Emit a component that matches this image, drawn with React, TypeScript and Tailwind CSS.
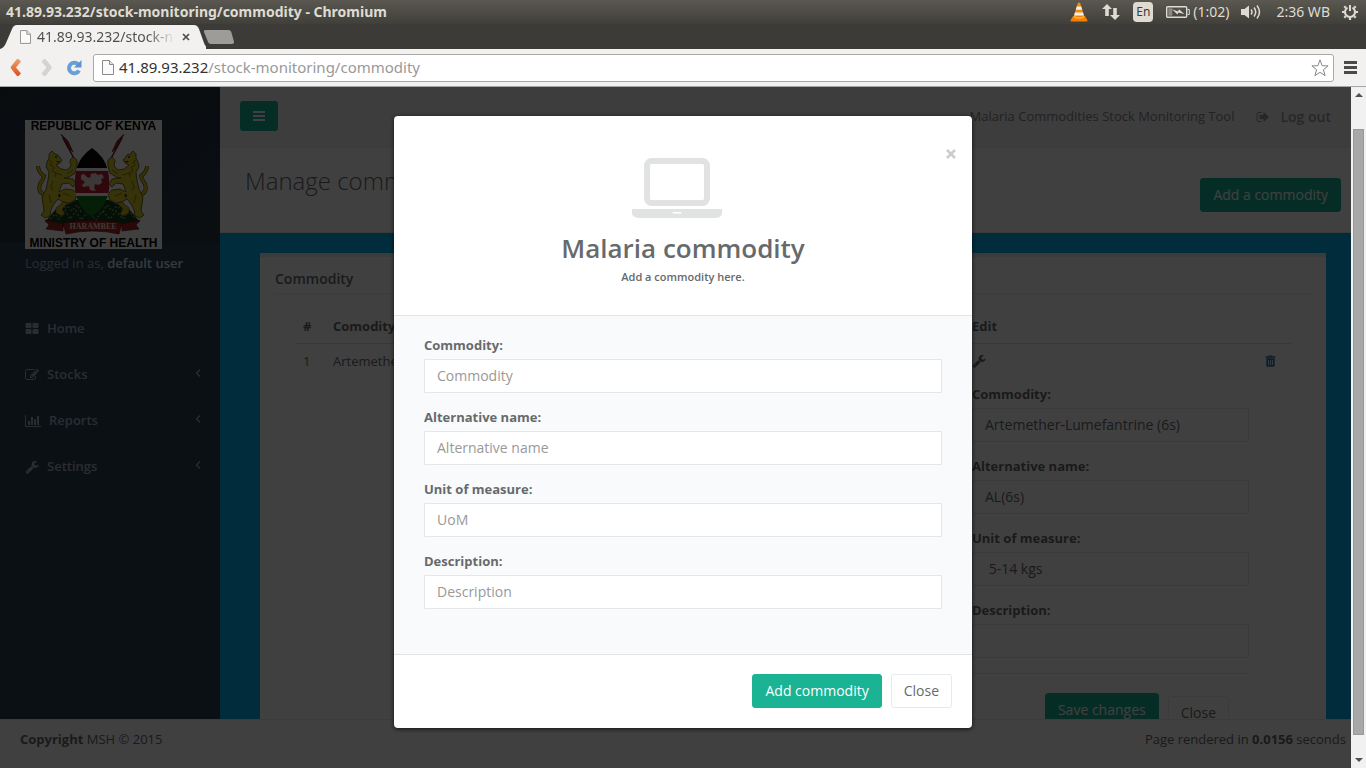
import React from 'react';

const ICONS = {
  edit: 'M888 1184l116-116-152-152-116 116v56h96v96h56zm440-720q-16-16-33 1l-350 350q-17 17-1 33t33-1l350-350q17-17 1-33zm80 594v190q0 119-84.5 203.5t-203.5 84.5h-832q-119 0-203.5-84.5t-84.5-203.5v-832q0-119 84.5-203.5t203.5-84.5h832q63 0 117 25 15 7 18 23 3 17-9 29l-49 49q-14 14-32 8-23-6-45-6h-832q-66 0-113 47t-47 113v832q0 66 47 113t113 47h832q66 0 113-47t47-113v-126q0-13 9-22l64-64q15-15 35-7t20 29zm-96-738l288 288-672 672h-288v-288zm444 132l-92 92-288-288 92-92q28-28 68-28t68 28l152 152q28 28 28 68t-28 68z',
  chart: 'M640 896v512h-256v-512h256zm384-512v1024h-256v-1024h256zm1024 1152v128h-2048v-1536h128v1408h1920zm-640-896v768h-256v-768h256zm384-384v1152h-256v-1152h256z',
  wrench: 'M448 1472q0-26-19-45t-45-19-45 19-19 45 19 45 45 19 45-19 19-45zm644-420l-682 682q-37 37-90 37-52 0-91-37l-106-108q-38-36-38-90 0-53 38-91l681-681q39 98 114.5 173.5t173.5 114.5zm634-435q0 39-23 106-47 134-164.5 217.5t-258.5 83.5q-185 0-316.5-131.5t-131.5-316.5 131.5-316.5 316.5-131.5q58 0 121.5 16.5t107.5 46.5q16 11 16 28t-16 28l-293 169v224l193 107q5-3 79-48.5t135.5-81 70.5-35.5q15 0 23.5 10t8.5 25z',
  signOut: 'M704 1440q0 4 1 20t.5 26.5-3 23.5-10 19.5-20.5 6.5h-320q-119 0-203.5-84.5t-84.5-203.5v-704q0-119 84.5-203.5t203.5-84.5h320q13 0 22.5 9.5t9.5 22.5q0 4 1 20t.5 26.5-3 23.5-10 19.5-20.5 6.5h-320q-66 0-113 47t-47 113v704q0 66 47 113t113 47h312l11.5 1 11.5 3 8 5.5 7 9 2 13.5zm928-544q0 26-19 45l-544 544q-19 19-45 19t-45-19-19-45v-288h-448q-26 0-45-19t-19-45v-384q0-26 19-45t45-19h448v-288q0-26 19-45t45-19 45 19l544 544q19 19 19 45z',
  laptop: 'M416 1152q-66 0-113-47t-47-113v-704q0-66 47-113t113-47h1088q66 0 113 47t47 113v704q0 66-47 113t-113 47h-1088zm-32-864v704q0 13 9.500 22.500t22.500 9.500h1088q13 0 22.500-9.500t9.500-22.500v-704q0-13-9.500-22.500t-22.500-9.500h-1088q-13 0-22.500 9.500t-9.500 22.500zM1760 1216h160v96q0 40-47 68t-113 28h-1600q-66 0-113-28t-47-68v-96h1760zm-720 96q16 0 16-16t-16-16h-160q-16 0-16 16t16 16h160z',
  grid: 'M832 1024v384q0 52-38 90t-90 38h-512q-52 0-90-38t-38-90v-384q0-52 38-90t90-38h512q52 0 90 38t38 90zm0-768v384q0 52-38 90t-90 38h-512q-52 0-90-38t-38-90v-384q0-52 38-90t90-38h512q52 0 90 38t38 90zm896 768v384q0 52-38 90t-90 38h-512q-52 0-90-38t-38-90v-384q0-52 38-90t90-38h512q52 0 90 38t38 90zm0-768v384q0 52-38 90t-90 38h-512q-52 0-90-38t-38-90v-384q0-52 38-90t90-38h512q52 0 90 38t38 90z',
};

function Icon({ d, box = '0 0 1792 1792', className }: { d: string; box?: string; className: string }) {
  return (
    <svg viewBox={box} className={className} fill="currentColor" aria-hidden="true">
      <path d={d} fillRule="evenodd" />
    </svg>
  );
}

function PageIcon({ className }: { className: string }) {
  return (
    <svg viewBox="0 0 12 15" className={className} aria-hidden="true">
      <path d="M.5.500h7l4 4v10H.5z" fill="#fafafa" stroke="#8a8a8a" />
      <path d="M7.500.500v4h4" fill="#e4e4e4" stroke="#8a8a8a" />
    </svg>
  );
}

function SystemBar() {
  return (
    <header className="flex h-6 shrink-0 items-center justify-between bg-linear-to-b from-[#5a5850] to-[#403f3a] pr-2 pl-[6px] text-[#dfdbd2]">
      <span className="text-sm font-bold">41.89.93.232/stock-monitoring/commodity - Chromium</span>
      <div className="flex items-center text-sm leading-6">
        <svg viewBox="0 0 18 20" className="mr-[14px] h-5 w-[18px]" aria-hidden="true">
          <path d="M7.800 1q1.200-1 2.400 0l4.300 14H3.500z" fill="#f58a0b" />
          <path d="M6.800 4.500h4.400l1 3.200H5.800zM5 10.500h8l.9 3H4.100z" fill="#eee" />
          <path d="M3 14h12l2.500 4.500q0 1-1 1h-15q-1 0-1-1z" fill="#f57f00" />
          <path d="M4 14q5 2.500 10 0v1.500q-5 2.500-10 0z" fill="#ffb74a" />
        </svg>
        <svg viewBox="0 0 18 16" className="mr-[13px] h-4 w-[18px]" fill="currentColor" aria-hidden="true">
          <path d="M5 0l5 5H6.800v7H3.200V5H0zM13 16l5-5h-3.200V4h-3.600v7H8z" />
        </svg>
        <span className="mr-[13px] flex h-5 w-5 items-center justify-center rounded-sm bg-[#dfdbd2] text-xs text-[#3c3b37]">En</span>
        <svg viewBox="0 0 24 12" className="mr-[3px] h-3 w-6" aria-hidden="true">
          <rect x=".7" y=".7" width="20" height="10.600" rx="1" fill="none" stroke="#dfdbd2" strokeWidth="1.400" />
          <path d="M21.500 3.500h1.800v5h-1.800" fill="none" stroke="#dfdbd2" />
          <path d="M2.300 2.300h4v7.400h-4z" fill="#8d8a82" />
          <path d="M6 3.200l6 2.300 1-2.300 5.500 5-6-1.800-1 2.200z" fill="#dfdbd2" />
        </svg>
        <span className="mr-3">(1:02)</span>
        <svg viewBox="0 0 20 16" className="mr-[15px] h-4 w-5" aria-hidden="true">
          <path d="M0 5h3.500L8 1.500v13L3.500 11H0z" fill="#dfdbd2" />
          <path d="M10 5.500q2 2.500 0 5M13 3.500q3.500 4.500 0 9M16 1.500q5 6.500 0 13" fill="none" stroke="#dfdbd2" strokeWidth="1.500" />
        </svg>
        <span className="mr-3">2:36 WB</span>
        <svg viewBox="0 0 16 16" className="h-4 w-4" fill="none" stroke="#dfdbd2" aria-hidden="true">
          <path d="M5.500 3.700a5 5 0 1 0 5 0" strokeWidth="2" />
          <path d="M8 1v6" strokeWidth="2" />
          <path d="M3.700 3.700L2.300 2.300M12.300 3.700l1.400-1.400M2.500 8H0M13.500 8H16M3.700 12.300l-1.400 1.400M12.300 12.300l1.400 1.400M8 13.500V16" strokeWidth="2.200" />
        </svg>
      </div>
    </header>
  );
}

function BrowserChrome() {
  return (
    <>
      <div className="flex h-[25px] shrink-0 items-end bg-[#3c3b37]">
        <div className="relative h-6 w-[206px]">
          <svg viewBox="0 0 206 24" className="absolute inset-0 h-6 w-[206px]" aria-hidden="true">
            <path d="M0 24q4-1 6-6l6-14q1.500-4 5-4h177q3.500 0 5 4l5 14q2 5 6 6z" fill="#f2f1f0" />
          </svg>
          <div className="relative flex h-6 items-center pl-5">
            <PageIcon className="h-[14px] w-[11px]" />
            <span className="ml-[6px] w-[138px] overflow-hidden bg-linear-to-r from-[#4c4c4c] from-80% to-transparent bg-clip-text text-sm whitespace-nowrap text-transparent">
              41.89.93.232/stock-n
            </span>
            <button aria-label="Close tab" className="ml-[7px] h-2 w-2 text-[#4c4c4c]">
              <svg viewBox="0 0 8 8" className="h-2 w-2" stroke="currentColor" strokeWidth="1.700">
                <path d="M1 1l6 6M7 1L1 7" />
              </svg>
            </button>
          </div>
        </div>
        <button aria-label="New tab" className="-ml-[2px] h-[19px] w-[30px]">
          <svg viewBox="0 0 30 19" className="h-[19px] w-[30px]">
            <path d="M1.500 0h23q2 0 2.800 2l2.500 9q.7 3-1.800 3H7q-2.200 0-3-2L0 2q-.5-2 1.500-2z" fill="#9d9c99" />
          </svg>
        </button>
      </div>
      <div className="flex h-[38px] shrink-0 items-center border-b border-[#a6a6a6] bg-[#f2f1f0] pr-[9px] pl-[10px]">
        <button aria-label="Back" className="mr-[20px]">
          <svg viewBox="0 0 11 17" className="h-[17px] w-[11px]">
            <defs>
              <linearGradient id="back" x1="0" y1="0" x2="0" y2="1">
                <stop offset="0" stopColor="#eda069" />
                <stop offset="1" stopColor="#df4f1d" />
              </linearGradient>
            </defs>
            <path d="M8.500 0L11 2.500 6 8.500 11 14.500 8.500 17H7L.8 9.200V7.800L7 0z" fill="url(#back)" />
          </svg>
        </button>
        <button aria-label="Forward" className="mr-[14px]">
          <svg viewBox="0 0 11 17" className="h-[17px] w-[11px]">
            <path d="M3 0L.5 2.500l5 6-5 6L3 17h1.500l6.200-7.800V7.800L4.500 0z" fill="#d4d3d2" />
          </svg>
        </button>
        <button aria-label="Reload" className="mr-[11px]">
          <svg viewBox="0 0 16 16" className="h-4 w-4">
            <path d="M12 4.200A5.300 5.300 0 1 0 13 10.500" fill="none" stroke="#6a9fd6" strokeWidth="4" />
            <path d="M15.500 0v7.500H8z" fill="#5c94d0" />
          </svg>
        </button>
        <div className="flex h-7 flex-1 items-center rounded-[3px] border border-[#a9a8a6] bg-white pr-1 pl-2 text-[15px]">
          <PageIcon className="h-[15px] w-3" />
          <span className="ml-[5px] flex-1 whitespace-nowrap text-[#999]">
            <span className="text-[#333]">41.89.93.232</span>/stock-monitoring/commodity
          </span>
          <svg viewBox="0 0 18 18" className="h-[18px] w-[18px]" aria-hidden="true">
            <path d="M9 .9l2.100 5.800 6 .2-4.700 3.800 1.700 6L9 13.300l-5.100 3.400 1.700-6L.9 6.900l6-.2z" fill="#fff" stroke="#888" strokeLinejoin="round" />
          </svg>
        </div>
        <button aria-label="Browser menu" className="ml-[10px]">
          <svg viewBox="0 0 13 13" className="h-[13px] w-[13px]">
            <path d="M0 1.500h13M0 6.500h13M0 11.500h13" stroke="#4a4a4a" strokeWidth="3" />
          </svg>
        </button>
      </div>
    </>
  );
}

function Lion() {
  return (
    <g>
      <path d="M21 75Q12 73 15 64Q18 60 19 56Q13 52 13 46" fill="none" stroke="#574b12" strokeWidth="4" />
      <path d="M21 75Q12 73 15 64Q18 60 19 56Q13 52 13 46" fill="none" stroke="#d2c022" strokeWidth="2.800" />
      <path
        d="M27 31l3 3 3 1 2 3 2 2-2 3-4 2 5 4 6 1 4-4-1-6 3-3 4 3 0 6-2 7-6 4-5 1 9 1 3 5-3 3-4-4-7 1-3 8 6-3 8 1 4 4-2 6-6 3-6-1-5-3-4 5-3 6-1 6-5 2-4-3 3-4-1-7-1-7 4-8 2-9 1-8-3-5 1-5 2-4 0-4z"
        fill="#d8c626"
        stroke="#574b12"
        strokeWidth=".8"
      />
      <path d="M38 82l-7 6 0 5 6 3 3-2-3-5 6-6z" fill="#c8b61f" stroke="#574b12" strokeWidth=".6" />
      <path d="M24 40l3 2-2 3 4 2-2 4 4 2-1 4M28 61l-2 6 2 4M24 75l2 8M38 73l7 3M42 54l6-4M30 53l7 2" fill="none" stroke="#8b7b16" strokeWidth="1" />
      <path d="M31 41l4 0-2 2z" fill="#8c1c1c" />
      <circle cx="31" cy="37" r=".9" fill="#222" />
      <path d="M33 74l3 1-2 3z" fill="#222" />
    </g>
  );
}

function Emblem() {
  return (
    <figure className="flex h-[129px] w-[137px] flex-col items-center justify-between bg-white font-['Liberation_Sans',sans-serif] text-xs leading-3 font-bold whitespace-nowrap text-black">
      <span>REPUBLIC OF KENYA</span>
      <svg viewBox="0 12 137 105" className="h-[105px] w-[137px]" aria-label="Coat of arms">
        <path d="M38 18l14 26M97 18L83 44" stroke="#7b1a20" strokeWidth="1.500" />
        <path d="M36 14l7 7 5 11-5-4zM99 14l-7 7-5 11 5-4z" fill="#9b1c26" stroke="#4b1014" strokeWidth=".6" />
        <path d="M20 102l10-12 7-4 6-2 8-4 33 0 8 4 6 2 7 4 10 12-24 6H43z" fill="#173f1b" />
        <path d="M25 99l5-5 4 5 6-9 5 9 6-8 5 9 7-8 8 8 6-9 8 8 6-8 7 8 6-8 6 7M36 90l6-4 5 5 5-6 4 7M98 90l-6-4-5 5-5-6-4 7" stroke="#6aa766" strokeWidth="1.300" fill="none" strokeDasharray="2 2" />
        <Lion />
        <g transform="translate(135 0) scale(-1 1)">
          <Lion />
        </g>
        <clipPath id="shield">
          <path d="M67 28q12 8 16 22 3 18-1 28-4 12-15 18-11-6-15-18-4-10-1-28 4-14 16-22z" />
        </clipPath>
        <g clipPath="url(#shield)">
          <path d="M45 27h44v21H45z" fill="#080808" />
          <path d="M45 48h44v28H45z" fill="#fff" />
          <path d="M45 51h44v22H45z" fill="#c41f38" />
          <path d="M45 76h44v24H45z" fill="#177a20" />
        </g>
        <path d="M56 55l3-1 3 3 3 1 1-4 4-1 3 2 4-1 2 4-3 1 1 4-4 2-3-1-1 4 2 3-6-1-1-4-6 1-1-2 3-3-4-3z" fill="#f4dede" />
        <path d="M20 100l18 4 0 7-17-2 3-4zM115 100l-18 4 0 7 17-2-3-4z" fill="#a52121" stroke="#4d1010" strokeWidth=".6" />
        <path d="M38 103q30-5 59 0l-3 11q-26-6-53 0z" fill="#b12626" stroke="#4d1010" strokeWidth=".6" />
        <text x="68" y="109" textAnchor="middle" fontSize="8" fill="#f5dfdc" className="font-['Liberation_Serif',serif]">
          HARAMBEE
        </text>
      </svg>
      <span>MINISTRY OF HEALTH</span>
    </figure>
  );
}

const MENU = [
  { label: 'Home', icon: ICONS.grid, box: '0 0 1792 1792', size: 'h-[14px] w-[14px]', sub: false },
  { label: 'Stocks', icon: ICONS.edit, box: '0 0 1792 1792', size: 'h-[14px] w-[14px]', sub: true },
  { label: 'Reports', icon: ICONS.chart, box: '0 0 2048 1792', size: 'h-[14px] w-4', sub: true },
  { label: 'Settings', icon: ICONS.wrench, box: '0 0 1792 1792', size: 'h-[14px] w-[14px]', sub: true },
];

function Sidebar() {
  return (
    <nav className="w-[220px] shrink-0 bg-[#2f4050] bg-linear-to-br from-[#23323f] to-[#293946] bg-[length:100%_156px] bg-no-repeat text-[13px]">
      <div className="px-[25px] pt-[33px] pb-[34px]">
        <Emblem />
        <p className="mt-[5px] leading-[18px] text-[#a7b1c2]">
          Logged in as, <strong className="font-semibold text-[#dfe4ed]">default user</strong>
        </p>
      </div>
      <ul>
        {MENU.map((item) => (
          <li key={item.label}>
            <a href="#" className="flex h-[46px] items-center px-[25px] font-semibold text-[#a7b1c2]">
              <Icon d={item.icon} box={item.box} className={item.size} />
              <span className="ml-2 flex-1">{item.label}</span>
              {item.sub && (
                <svg viewBox="0 0 6 8" className="-mr-[6px] mb-1 h-2 w-[6px]" fill="none" stroke="currentColor" strokeWidth="1.200" aria-hidden="true">
                  <path d="M5 .500L1.500 4 5 7.500" />
                </svg>
              )}
            </a>
          </li>
        ))}
      </ul>
    </nav>
  );
}

type FieldProps = { id: string; label: string; placeholder?: string; value?: string };

function Field({ id, label, placeholder, value }: FieldProps) {
  return (
    <div className="mb-[15px]">
      <label htmlFor={id} className="mb-[5px] block text-[13px] leading-[18px] font-bold">
        {label}
      </label>
      <input
        id={id}
        type="text"
        placeholder={placeholder}
        defaultValue={value}
        className="block h-[34px] w-full rounded-[1px] border border-[#e5e6e7] bg-white px-3 pb-[2px] text-sm text-inherit placeholder:text-[#999]"
      />
    </div>
  );
}

const primaryButton = 'h-[34px] rounded-[3px] border border-[#1ab394] bg-[#1ab394] px-3 text-sm text-white';
const plainButton = 'h-[34px] rounded-[3px] border border-[#e7eaec] bg-white px-3 text-sm text-[#676a6c]';

function CommodityTable() {
  return (
    <table className="w-full table-fixed text-left text-[13px] leading-[18px]">
      <colgroup>
        <col className="w-[30px]" />
        <col />
        <col className="w-[293px]" />
        <col className="w-[34px]" />
      </colgroup>
      <thead>
        <tr className="border-b border-[#dddddd] font-bold">
          <th className="p-2">#</th>
          <th className="p-2">Comodity</th>
          <th className="p-2">Edit</th>
          <th className="p-2" />
        </tr>
      </thead>
      <tbody>
        <tr className="align-top">
          <td className="p-2">1</td>
          <td className="p-2">Artemether-Lumefantrine (6s)</td>
          <td className="p-2">
            <button aria-label="Edit commodity" className="flex h-[18px] items-center">
              <Icon d={ICONS.wrench} className="h-[14px] w-[14px]" />
            </button>
            <form className="mt-[15px]">
              <Field id="row-name" label="Commodity:" value="Artemether-Lumefantrine (6s)" />
              <Field id="row-alt" label="Alternative name:" value="AL(6s)" />
              <Field id="row-unit" label="Unit of measure:" value=" 5-14 kgs" />
              <Field id="row-desc" label="Description:" />
              <div className="flex items-end justify-end gap-[9px] border-t border-[#e5e5e5] pt-[19px] pr-5">
                <button type="button" className={primaryButton + ' mb-[3px]'}>Save changes</button>
                <button type="button" className={plainButton}>Close</button>
              </div>
            </form>
          </td>
          <td className="p-2">
            <button aria-label="Delete commodity" className="flex h-[18px] items-center text-[#337ab7]">
              <svg viewBox="0 0 11 12" className="h-3 w-[11px]" fill="currentColor">
                <path fillRule="evenodd" d="M3.500 1.200V.500h4v.700H10q.5 0 .5.500v1H.500v-1q0-.5.500-.5zM1.300 3.300h8.400v7.200q0 1.200-1.200 1.200h-6q-1.200 0-1.200-1.200zM3.200 5v5h.8V5zM5.100 5v5h.8V5zM7 5v5h.8V5z" />
              </svg>
            </button>
          </td>
        </tr>
      </tbody>
    </table>
  );
}

function MainArea() {
  return (
    <main className="flex min-w-0 flex-1 flex-col">
      <div className="flex h-[61px] shrink-0 items-center justify-between border-b border-[#e7eaec] bg-[#f3f3f4] pr-5 pl-5">
        <button aria-label="Toggle menu" className="mb-[3px] flex h-[30px] w-[38px] items-center justify-center rounded-[3px] bg-[#1ab394] text-white">
          <svg viewBox="0 0 12 10" className="h-[10px] w-3" stroke="currentColor" strokeWidth="2">
            <path d="M0 1h12M0 5h12M0 9h12" />
          </svg>
        </button>
        <div className="flex items-center text-[#888888]">
          <span className="text-[13px]">Malaria Commodities Stock Monitoring Tool</span>
          <a href="#" className="ml-[22px] flex items-center gap-[10px] text-sm font-semibold text-[#999c9e]">
            <Icon d={ICONS.signOut} className="h-[14px] w-[14px]" />
            Log out
          </a>
        </div>
      </div>
      <div className="flex h-[85px] shrink-0 justify-between border-b border-[#e7eaec] bg-white pr-[10px] pl-[25px]">
        <h2 className="mt-[17px] text-2xl font-light">Manage commodities</h2>
        <button className={primaryButton + ' mt-[30px]'}>Add a commodity</button>
      </div>
      <div className="flex-1 bg-[#00aeef] pt-5 pr-[25px] pl-10">
        <section className="border-t-4 border-[#e7eaec] bg-white px-[15px] pb-5">
          <h5 className="border-b border-[#e7eaec] pt-[12px] pb-1 text-sm leading-5 font-semibold">Commodity</h5>
          <div className="p-5 pt-[15px]">
            <CommodityTable />
          </div>
        </section>
      </div>
    </main>
  );
}

function CommodityDialog() {
  return (
    <div className="absolute inset-0 flex items-start justify-center pt-[29px]">
      <div role="dialog" aria-labelledby="dialog-title" className="w-[578px] overflow-hidden rounded-[4px] bg-white shadow-[0_1px_4px_rgba(0,0,0,0.7)]">
        <div className="relative flex h-[200px] flex-col items-center border-b border-[#e2e4e5] pt-[42px]">
          <button aria-label="Close dialog" className="absolute top-[33px] right-4 h-[10px] w-[10px] text-[#cccccc]">
            <svg viewBox="0 0 10 10" className="h-[10px] w-[10px]" stroke="currentColor" strokeWidth="2.500">
              <path d="M1 1l8 8M9 1L1 9" />
            </svg>
          </button>
          <Icon d={ICONS.laptop} box="0 128 1920 1280" className="mr-3 h-[60px] w-[90px] text-[#e1e3e3]" />
          <h4 id="dialog-title" className="mt-4 text-[26px] leading-[28px] font-semibold">Malaria commodity</h4>
          <small className="mt-[7px] text-[11px] leading-4 font-semibold">Add a commodity here.</small>
        </div>
        <form>
          <div className="bg-[#f8fafb] px-[30px] pt-5 pb-[30px]">
            <Field id="new-name" label="Commodity:" placeholder="Commodity" />
            <Field id="new-alt" label="Alternative name:" placeholder="Alternative name" />
            <Field id="new-unit" label="Unit of measure:" placeholder="UoM" />
            <Field id="new-desc" label="Description:" placeholder="Description" />
          </div>
          <div className="flex justify-end gap-[9px] border-t border-[#e2e4e5] px-5 pt-[19px] pb-5">
            <button type="button" className={primaryButton}>Add commodity</button>
            <button type="button" className={plainButton}>Close</button>
          </div>
        </form>
      </div>
    </div>
  );
}

function Scrollbar() {
  return (
    <div className="flex w-[15px] shrink-0 flex-col items-center bg-[#f1f1f1] py-[6px]" aria-hidden="true">
      <svg viewBox="0 0 8 4" className="h-1 w-2">
        <path d="M0 4l4-4 4 4z" fill="#505050" />
      </svg>
      <div className="mt-8 mb-[23px] w-[11px] flex-1 border border-[#999] bg-[#a8a8a8]" />
      <svg viewBox="0 0 8 4" className="h-1 w-2">
        <path d="M0 0l4 4 4-4z" fill="#505050" />
      </svg>
    </div>
  );
}

export default function App() {
  return (
    <div className="flex h-screen flex-col overflow-hidden font-['Open_Sans','Noto_Sans',sans-serif]">
      <div className="font-['Noto_Sans',sans-serif]">
        <SystemBar />
        <BrowserChrome />
      </div>
      <div className="relative flex min-h-0 flex-1 text-[#676a6c]">
        <div className="relative flex min-w-0 flex-1 flex-col overflow-hidden">
          <div className="flex min-h-0 flex-1 overflow-hidden">
            <Sidebar />
            <MainArea />
          </div>
          <footer className="flex h-[49px] shrink-0 justify-between border-t border-[#e7eaec] bg-white pt-[10px] pr-[5px] pl-5 text-[13px] leading-[18px]">
            <span><strong>Copyright</strong> MSH © 2015</span>
            <span>Page rendered in <strong>0.0156</strong> seconds</span>
          </footer>
          <div className="absolute inset-0 bg-black/75" />
        </div>
        <Scrollbar />
        <CommodityDialog />
      </div>
    </div>
  );
}
